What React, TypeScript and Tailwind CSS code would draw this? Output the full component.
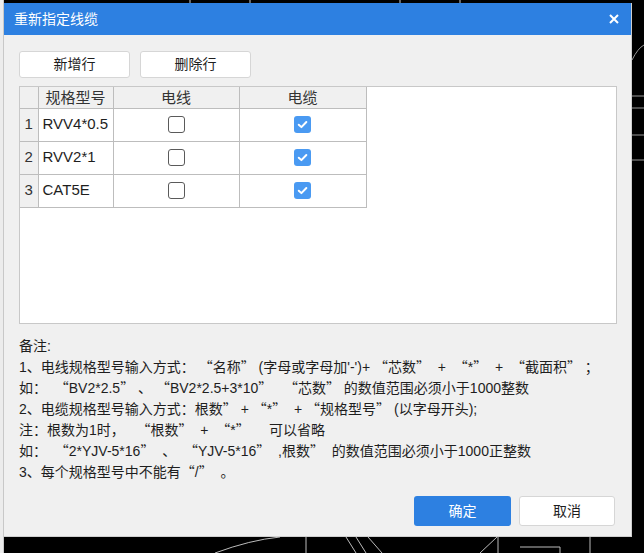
import React from "react";

const rows = [
  { id: 1, name: "RVV4*0.5", wire: false, cable: true },
  { id: 2, name: "RVV2*1", wire: false, cable: true },
  { id: 3, name: "CAT5E", wire: false, cable: true },
];

const notes = [
  "备注:",
  "1、电线规格型号输入方式： “名称” (字母或字母加'-')+ “芯数”  +  “*”  +  “截面积” ；",
  "如：  “BV2*2.5” 、 “BV2*2.5+3*10”   “芯数” 的数值范围必须小于1000整数",
  "2、电缆规格型号输入方式：根数” + “*”  + “规格型号” (以字母开头);",
  "注：根数为1时，   “根数”  +  “*”     可以省略",
  "如：  “2*YJV-5*16”  、  “YJV-5*16”  ,根数”  的数值范围必须小于1000正整数",
  "3、每个规格型号中不能有“/”  。",
];

// chinese quotes are drawn full width, as in the CJK UI font
function NoteLine({ text }: { text: string }) {
  const parts = text.split(/([“”])/);
  return (
    <div className="whitespace-pre">
      {parts.map((p, i) =>
        p === "“" || p === "”" ? (
          <span key={i} className="[font-family:'Noto_Sans_CJK_SC',sans-serif] [font-feature-settings:'fwid']">
            {p}
          </span>
        ) : (
          <React.Fragment key={i}>{p}</React.Fragment>
        )
      )}
    </div>
  );
}

function Check({ checked }: { checked: boolean }) {
  if (!checked) {
    return <span className="inline-block w-[17px] h-[17px] rounded-[3px] border border-[#5a5a5a] bg-white align-middle" />;
  }
  return (
    <span className="inline-flex w-[17px] h-[17px] rounded-[3px] bg-[#4a9af2] items-center justify-center align-middle">
      <svg width="11" height="11" viewBox="0 0 10 10">
        <path d="M1.6 5.2 L4 7.4 L8.5 2.7" fill="none" stroke="white" strokeWidth="1.8" strokeLinecap="round" strokeLinejoin="round" />
      </svg>
    </span>
  );
}

export default function App() {
  return (
    <div
      className="relative w-[644px] h-[553px] bg-black overflow-hidden flex"
      style={{ fontFamily: '"Liberation Sans", "Noto Sans CJK SC", sans-serif' }}
    >
      {/* CAD background drawing */}
      <svg className="absolute inset-0" width="644" height="553" viewBox="0 0 644 553">
        <path d="M215 553 Q250 540 280 537" fill="none" stroke="#bbb" strokeWidth="1" />
        <path d="M306 537 L306 553 M346 537 L356 553 M356 537 L366 553 M368 537 L382 553" stroke="#bbb" strokeWidth="1" />
        <path d="M480 553 L497 537 M498 537 L498 553 M520 547 L560 547 M560 547 L560 553 M590 537 L590 553" stroke="#bbb" strokeWidth="1" />
        <path d="M632 60 Q638 48 644 45 M632 96 L644 96 M632 108 L644 108 M632 135 L644 135 M632 160 L644 160" fill="none" stroke="#999" strokeWidth="1" />
        <path d="M190 0 L190 3 M250 0 L250 3 M400 0 L400 3 M460 0 L460 3" stroke="#ccc" strokeWidth="1" />
      </svg>

      <div className="relative w-[4px] h-full bg-[#ececec] border-r border-[#c8c8c8]" />

      <div className="relative mt-[3px] w-[628px] h-[534px] flex flex-col bg-[#f0f0f0] border-r border-b border-[#cfcfcf]">
        {/* title bar */}
        <div className="h-[32px] shrink-0 bg-[#2d80e1] flex items-center justify-between pl-[10px] pr-[12px]">
          <span className="text-[14px] text-white leading-none">重新指定线缆</span>
          <svg width="10" height="10" viewBox="0 0 10 10">
            <path d="M1 1 L9 9 M9 1 L1 9" stroke="white" strokeWidth="2" />
          </svg>
        </div>

        <div className="flex-1 flex flex-col pl-[15px] pr-[15px]">
          {/* toolbar buttons */}
          <div className="flex gap-[10px] mt-[16px]">
            {["新增行", "删除行"].map((t) => (
              <button
                key={t}
                className="w-[111px] h-[27px] bg-white border border-[#d6d6d6] rounded-[3px] text-[14px] text-[#1e1e1e]"
              >
                {t}
              </button>
            ))}
          </div>

          {/* grid */}
          <div className="mt-[8px] w-[598px] h-[238px] bg-white border border-[#c8c8c8]">
            <table className="border-collapse text-[15px] text-[#1e1e1e]">
              <thead>
                <tr className="h-[21px] bg-[#f0f0f0]">
                  <th className="w-[18px] p-0 border-r border-b border-[#bdbdbd] font-normal" />
                  <th className="w-[75px] p-0 border-r border-b border-[#bdbdbd] font-normal text-[#333] leading-none">规格型号</th>
                  <th className="w-[126px] p-0 border-r border-b border-[#bdbdbd] font-normal text-[#333] leading-none">电线</th>
                  <th className="w-[127px] p-0 border-r border-b border-[#bdbdbd] font-normal text-[#333] leading-none">电缆</th>
                </tr>
              </thead>
              <tbody>
                {rows.map((r) => (
                  <tr key={r.id} className="h-[33px]">
                    <td className="p-0 text-center bg-[#f0f0f0] border-r border-b border-[#bdbdbd] text-[#333]">{r.id}</td>
                    <td className="p-0 pl-[4px] border-r border-b border-[#bdbdbd] whitespace-nowrap">{r.name}</td>
                    <td className="p-0 text-center border-r border-b border-[#bdbdbd] leading-none">
                      <Check checked={r.wire} />
                    </td>
                    <td className="p-0 text-center border-r border-b border-[#bdbdbd] leading-none">
                      <Check checked={r.cable} />
                    </td>
                  </tr>
                ))}
              </tbody>
            </table>
          </div>

          {/* notes */}
          <div className="mt-[12px] text-[14px] leading-[20px] text-[#1e1e1e]">
            {notes.map((n, i) => (
              <NoteLine key={i} text={n} />
            ))}
          </div>

          {/* footer buttons */}
          <div className="mt-[14px] flex justify-end gap-[8px] pr-[1px]">
            <button className="w-[97px] h-[30px] rounded-[3px] bg-[#2d80e1] text-white text-[14px]">确定</button>
            <button className="w-[96px] h-[30px] rounded-[3px] bg-white border border-[#d6d6d6] text-[#1e1e1e] text-[14px]">取消</button>
          </div>
        </div>
      </div>
    </div>
  );
}
